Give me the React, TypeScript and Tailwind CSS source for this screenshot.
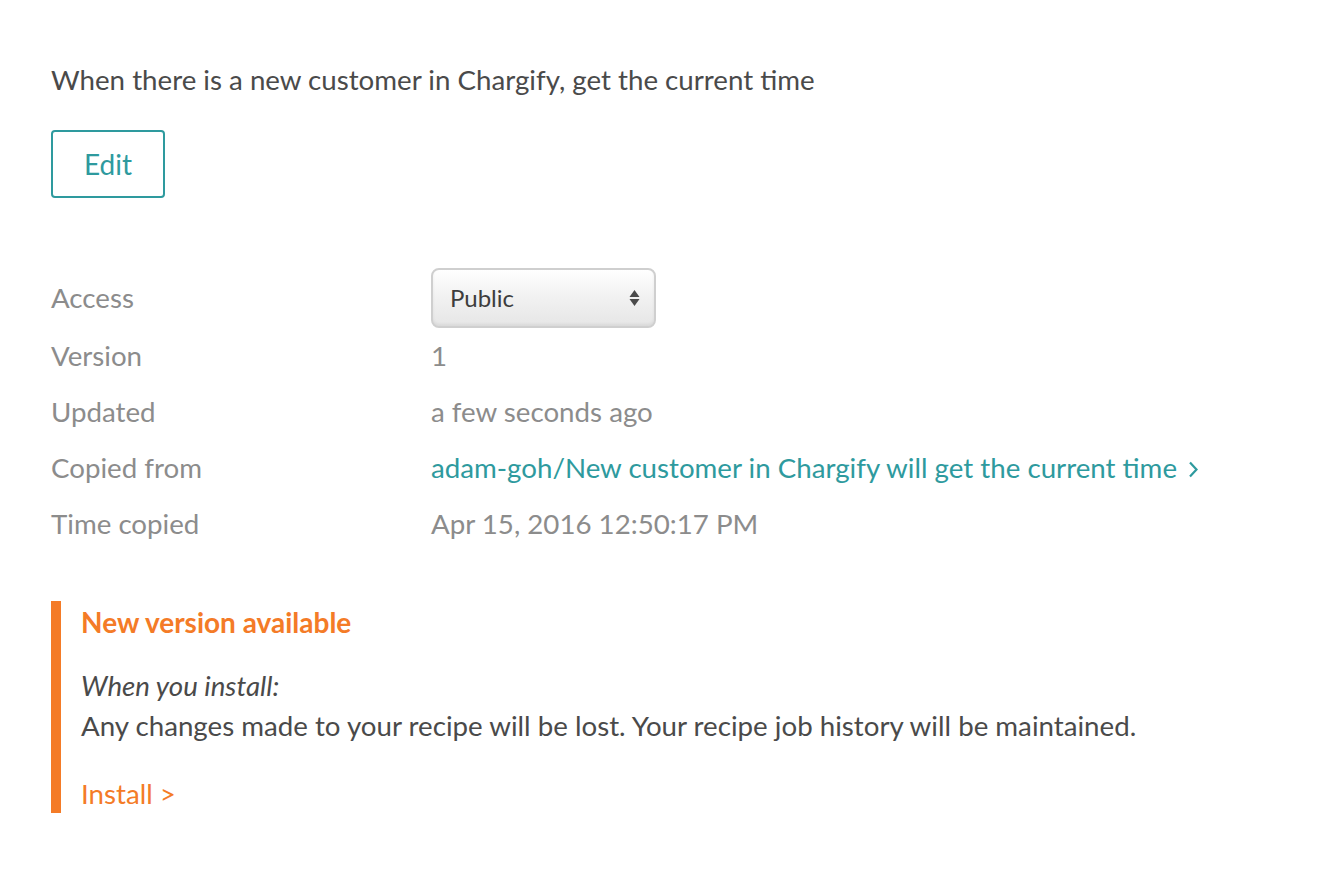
import React from "react";

export default function App() {
  return (
    <div className="min-h-[876px] w-[1318px] bg-white font-['Lato','Noto_Sans',sans-serif] text-[27.7px]">
      <div className="pl-[51px] pt-[64px]">
        <div className="h-[32px] leading-[32px] text-[#4a4a4a]">
          When there is a new customer in Chargify, get the current time
        </div>
        <button className="mt-[34px] flex h-[68px] w-[114px] items-center justify-center rounded-[4px] border-2 border-[#2e9a9e] text-[28px] text-[#2e9a9e]">
          Edit
        </button>

        <div className="mt-[70px]">
          <div className="flex h-[60px] items-center">
            <div className="w-[380px] text-[#8c8c8c]">Access</div>
            <div className="flex h-[60px] w-[225px] items-center justify-between rounded-[8px] border-2 border-[#cfcfcf] bg-gradient-to-b from-[#ffffff] via-[#f1f1f1] to-[#e6e6e6] pl-[17px] pr-[14px] shadow-[inset_0_-2px_3px_rgba(0,0,0,0.06)]">
              <span className="text-[24px] text-[#3d3d3d]">Public</span>
              <svg width="11" height="18" viewBox="0 0 11 18">
                <path d="M5.5 1 L10.5 8 L0.5 8 Z" fill="#4a4a4a" />
                <path d="M0.5 10 L10.5 10 L5.5 17 Z" fill="#4a4a4a" />
              </svg>
            </div>
          </div>
          <div className="flex h-[56px] items-center">
            <div className="w-[380px] text-[#8c8c8c]">Version</div>
            <div className="text-[#8c8c8c]">1</div>
          </div>
          <div className="flex h-[56px] items-center">
            <div className="w-[380px] text-[#8c8c8c]">Updated</div>
            <div className="text-[#8c8c8c]">a few seconds ago</div>
          </div>
          <div className="flex h-[56px] items-center">
            <div className="w-[380px] text-[#8c8c8c]">Copied from</div>
            <div className="flex items-center text-[#2e9a9e]">
              <span>adam-goh/New customer in Chargify will get the current time</span>
              <svg className="ml-[11px] mt-[4px]" width="11" height="17" viewBox="0 0 11 17">
                <path d="M2 1.5 L8.5 8.5 L2 15.5" fill="none" stroke="#2e9a9e" strokeWidth="2.2" />
              </svg>
            </div>
          </div>
          <div className="flex h-[56px] items-center">
            <div className="w-[380px] text-[#8c8c8c]">Time copied</div>
            <div className="text-[#8c8c8c]">Apr 15, 2016 12:50:17 PM</div>
          </div>
        </div>

        <div className="mt-[49px] h-[212px] border-l-[10px] border-[#f47b27] pl-[20px]">
          <div className="flex h-[42px] items-center text-[28px] font-bold text-[#f47b27]">New version available</div>
          <div className="mt-[23px] leading-[40px] italic text-[#4a4a4a]">When you install:</div>
          <div className="leading-[40px] text-[#4a4a4a]">
            Any changes made to your recipe will be lost. Your recipe job history will be maintained.
          </div>
          <div className="mt-[28px] leading-[40px] text-[#f47b27]">Install &gt;</div>
        </div>
      </div>
    </div>
  );
}
